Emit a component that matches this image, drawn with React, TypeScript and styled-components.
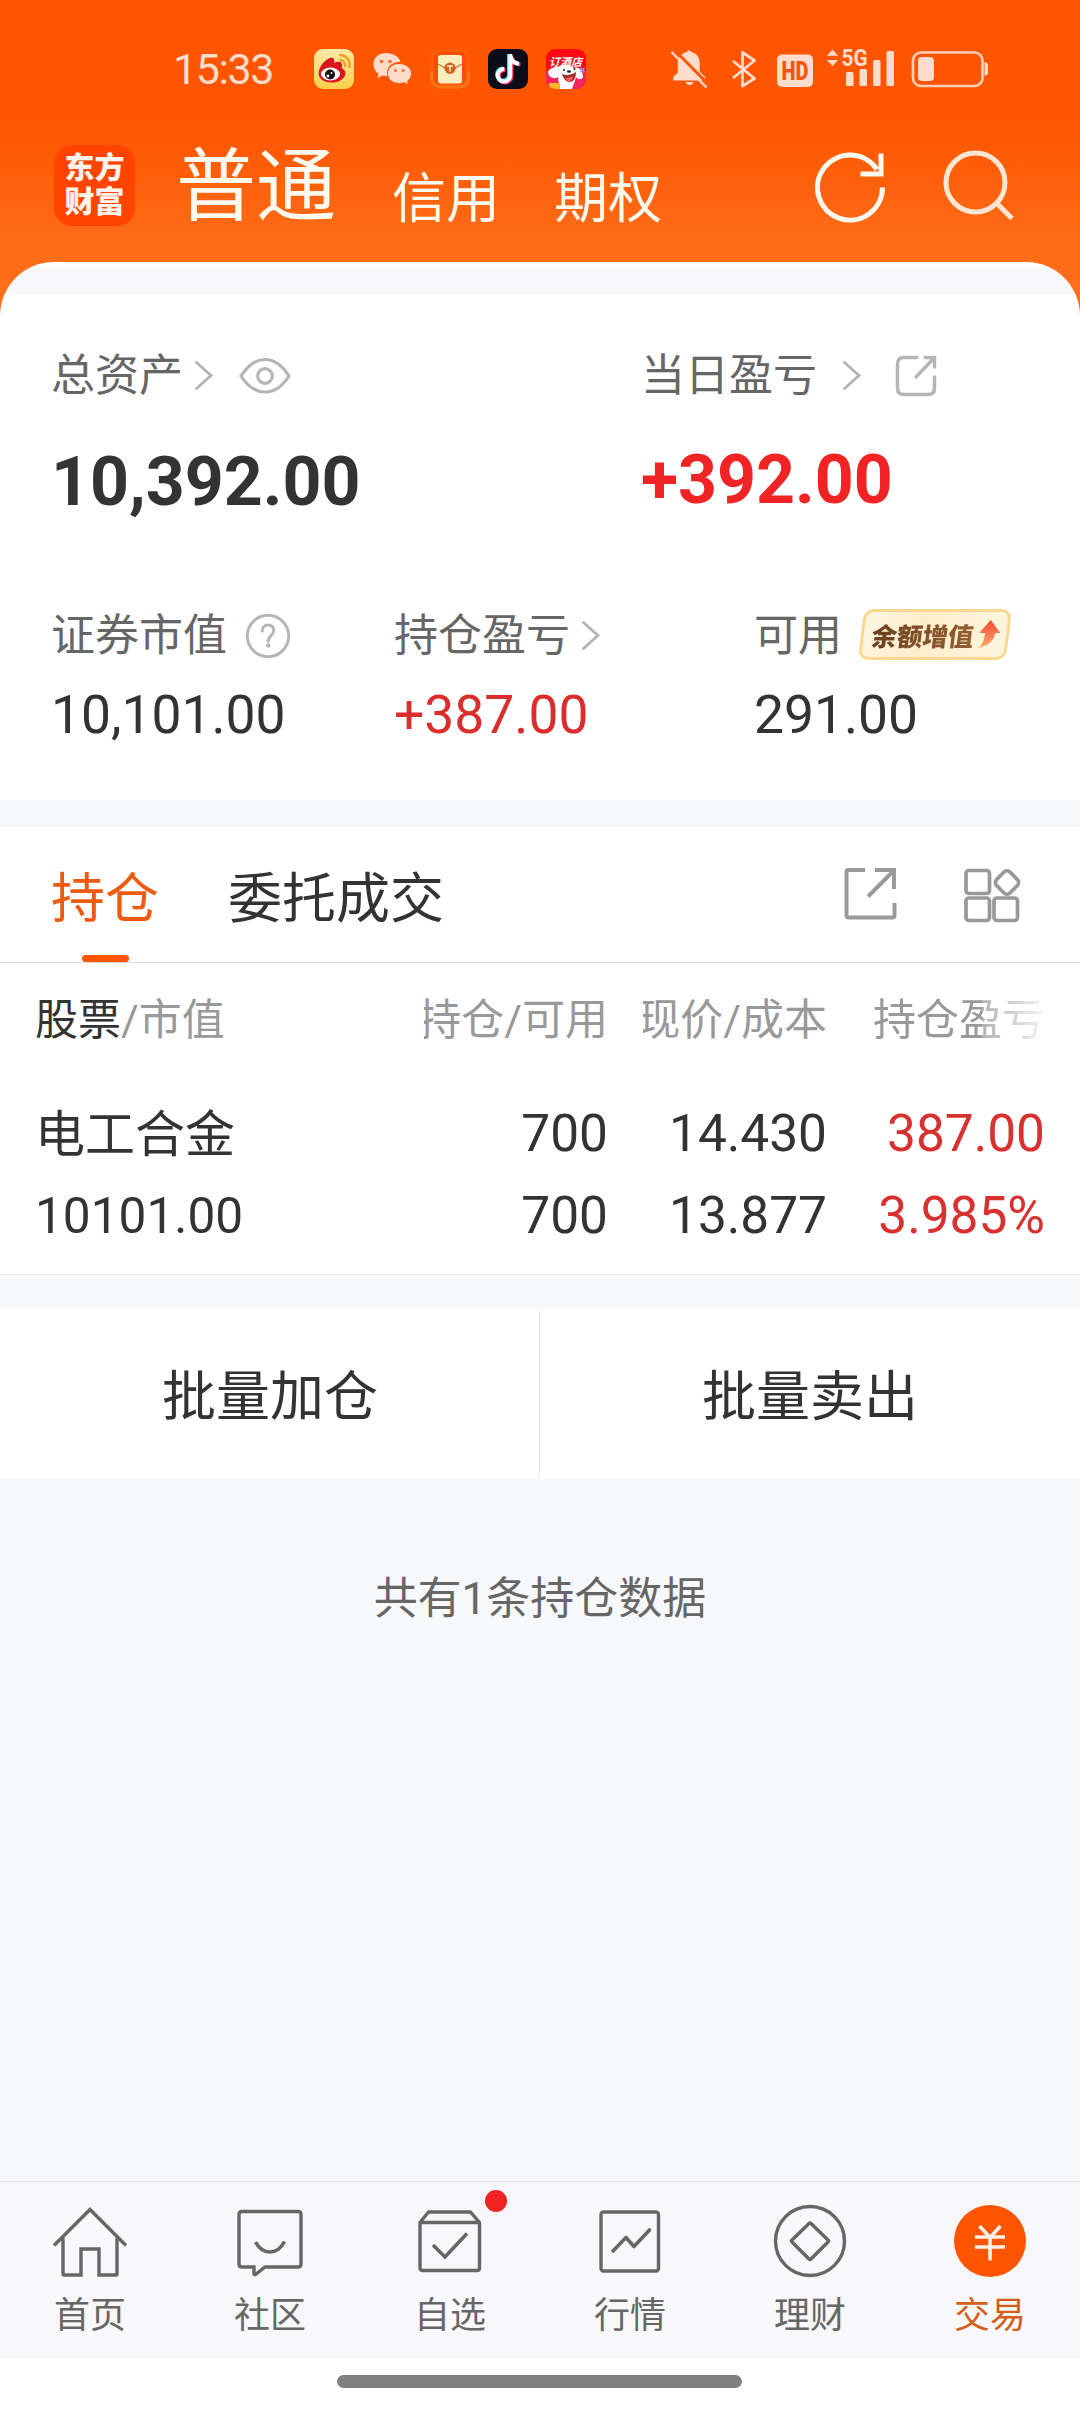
import React from "react";
import styled, { createGlobalStyle } from "styled-components";

const GlobalStyle = createGlobalStyle`
  * { box-sizing: border-box; }
  body { margin: 0; background: #fff; }
`;

const Page = styled.div`
  width: 1080px;
  height: 2412px;
  display: flex;
  flex-direction: column;
  overflow: hidden;
  font-family: Roboto, "Noto Sans CJK SC", sans-serif;
  color: #333;
  white-space: nowrap;
  background: #f7f8fa;
`;

const Hero = styled.header`
  flex: none;
  height: 320px;
  background: linear-gradient(180deg, #ff5500 0, #ff5500 122px, #ff6c18 245px, #ff701c 320px);
`;

const StatusBar = styled.div`
  height: 138px;
  padding: 0 92px 0 173px;
  display: flex;
  align-items: center;
  color: #ffdccb;
`;

const Clock = styled.div`
  width: 141px;
  font-size: 43px;
  line-height: 50px;
  letter-spacing: -1.4px;
`;

const AppIcons = styled.div`
  display: flex;
  gap: 18px;
  svg { display: block; }
`;

const SystemIcons = styled.div`
  margin-left: auto;
  display: flex;
  svg { display: block; }
`;

const TitleBar = styled.div`
  height: 124px;
  padding: 0 64px 0 54px;
  display: flex;
  align-items: flex-start;
  color: #fffaf0;
`;

const Logo = styled.div`
  width: 81px;
  height: 81px;
  margin-top: 7px;
  border-radius: 18px;
  background: #ff4400;
  color: #fff4ec;
  font: 900 30px/34px "Noto Sans CJK SC", sans-serif;
  text-align: center;
  padding-top: 3px;
`;

const AccountTab = styled.div<{ $main?: boolean }>`
  margin-left: ${(p) => (p.$main ? 41 : 54)}px;
  margin-right: ${(p) => (p.$main ? 2 : 0)}px;
  margin-top: ${(p) => (p.$main ? -1 : 27)}px;
  font-size: ${(p) => (p.$main ? 80 : 54)}px;
  line-height: ${(p) => (p.$main ? 100 : 70)}px;
`;

const TitleActions = styled.div`
  margin-left: auto;
  margin-top: 11px;
  display: flex;
  gap: 54px;
  svg { display: block; }
`;

const Sheet = styled.div`
  height: 58px;
  border-radius: 54px 54px 0 0;
  background: linear-gradient(180deg, #fff 0 5px, #f8f8fa 5px 32px, #fff 32px);
`;

const Assets = styled.section`
  flex: none;
  height: 480px;
  background: #fff;
`;

const PrimaryGrid = styled.div`
  display: grid;
  grid-template-columns: 590px 1fr;
  padding: 26px 0 0 51px;
`;

const MetricGrid = styled.div`
  display: grid;
  grid-template-columns: 343px 360px 1fr;
  padding: 84px 0 0 51px;
`;

const Label = styled.div`
  height: 60px;
  display: flex;
  align-items: center;
  font-size: 44px;
  line-height: 60px;
  color: #666;
  svg { display: block; flex: none; }
`;

const IconSlot = styled.span<{ $gap: number }>`
  margin-left: ${(p) => p.$gap}px;
`;

const BigValue = styled.div<{ $up?: boolean }>`
  margin-top: ${(p) => (p.$up ? 34 : 36)}px;
  height: 80px;
  font-size: 68px;
  line-height: 80px;
  font-weight: 700;
  color: ${(p) => (p.$up ? "#f02424" : "#333")};
`;

const Value = styled.div<{ $up?: boolean }>`
  margin-top: 14px;
  font-size: 53.4px;
  line-height: 70px;
  color: ${(p) => (p.$up ? "#dc2d2d" : "#333")};
`;

const Badge = styled.span`
  width: 148px;
  height: 51px;
  margin: -4px 0 0 19px;
  border: 3px solid #f8d98e;
  border-radius: 10px;
  background: linear-gradient(100deg, #fff6e2, #feedca 40%, #fff5df);
  transform: skewX(-7deg);
  display: flex;
  align-items: center;
  padding-left: 8px;
  gap: 5px;
`;

const BadgeText = styled.span`
  font: 900 25.5px/44px "Noto Sans CJK SC", sans-serif;
  background: linear-gradient(90deg, #6a4022, #95602f);
  background-clip: text;
  -webkit-background-clip: text;
  color: transparent;
`;

const Band = styled.div<{ $h: number }>`
  flex: none;
  height: ${(p) => p.$h}px;
  background: #f7f8fa;
`;

const TabBar = styled.nav`
  flex: none;
  height: 136px;
  background: #fff;
  border-bottom: 1px solid #dcdcdc;
  padding: 0 57px 0 51px;
  display: flex;
`;

const Tab = styled.div<{ $active?: boolean }>`
  position: relative;
  height: 135px;
  margin-right: 69px;
  font-size: 54px;
  line-height: 145px;
  color: ${(p) => (p.$active ? "#ee5a10" : "#333")};
  &::after {
    content: "";
    display: ${(p) => (p.$active ? "block" : "none")};
    position: absolute;
    left: 31px;
    bottom: 0;
    width: 47px;
    height: 7px;
    border-radius: 4px;
    background: #ff5500;
  }
`;

const TabActions = styled.div`
  margin-left: auto;
  padding-top: 40px;
  display: flex;
  gap: 66px;
  svg { display: block; }
`;

const Holdings = styled.section`
  flex: none;
  height: 312px;
  background: #fff;
  border-bottom: 1px solid #e9e9eb;
`;

const Row = styled.div<{ $top: number; $h: number }>`
  display: grid;
  grid-template-columns: 389px 184px 35px 184px 33px 185px;
  padding-left: 35px;
  padding-top: ${(p) => p.$top}px;
  height: ${(p) => p.$h}px;
`;

const HeadCell = styled.div<{ $right?: boolean }>`
  display: flex;
  justify-content: ${(p) => (p.$right ? "flex-end" : "flex-start")};
  overflow: hidden;
  font-size: 43px;
  line-height: 60px;
  color: #999;
  b { font-weight: 400; color: #333; }
`;

const FadingCell = styled(HeadCell)`
  mask-image: linear-gradient(90deg, #000 122px, rgba(0, 0, 0, 0.75) 122px, rgba(0, 0, 0, 0.1) 185px);
`;

const Gap = styled.div``;

const Cell = styled.div<{ $kind?: "name" | "amount"; $up?: boolean }>`
  text-align: ${(p) => (p.$kind ? "left" : "right")};
  font-size: ${(p) => (p.$kind === "name" ? 50 : p.$kind === "amount" ? 49.6 : 51.4)}px;
  line-height: ${(p) => (p.$kind === "name" ? 64 : 62)}px;
  color: ${(p) => (p.$up ? "#d93030" : "#333")};
`;

const BatchActions = styled.div`
  flex: none;
  height: 169px;
  display: grid;
  grid-template-columns: 540px 540px;
  background: #fff;
`;

const BatchButton = styled.div`
  text-align: center;
  font-size: 54px;
  line-height: 178px;
  height: 169px;
  & + & { box-shadow: -1px 0 #ebebeb; }
`;

const Summary = styled.div`
  flex: 1;
  padding-top: 91px;
  font-size: 44px;
  line-height: 60px;
  text-align: center;
  color: #666;
`;

const BottomNav = styled.nav`
  flex: none;
  height: 177px;
  border-top: 1px solid #e2e3e5;
  background: #f8f8fa;
  display: grid;
  grid-template-columns: repeat(6, 180px);
`;

const NavItem = styled.div<{ $active?: boolean }>`
  position: relative;
  display: flex;
  flex-direction: column;
  align-items: center;
  padding-top: 18px;
  font-size: 36px;
  line-height: 50px;
  color: ${(p) => (p.$active ? "#d35f1a" : "#666")};
  svg { display: block; margin-bottom: 11px; }
`;

const Dot = styled.i`
  position: absolute;
  left: 125px;
  top: 8px;
  width: 22px;
  height: 22px;
  border-radius: 50%;
  background: #f02323;
`;

const GestureArea = styled.div`
  flex: none;
  height: 54px;
  background: #fff;
  display: flex;
  justify-content: center;
  padding: 17px 1px 0 0;
`;

const GestureBar = styled.div`
  width: 405px;
  height: 13px;
  border-radius: 7px;
  background: #808080;
`;

const Weibo = () => (
  <svg width="40" height="40" viewBox="0 0 40 40">
    <defs>
      <linearGradient id="wb" x1="0" y1="0" x2="0" y2="1">
        <stop offset="0" stopColor="#ffe9a8" />
        <stop offset="1" stopColor="#fdd04a" />
      </linearGradient>
    </defs>
    <rect width="40" height="40" rx="9" fill="url(#wb)" />
    <path d="M16 9c4-1 5 2 4 5 4-2 8-2 8 2 0 2-1 3 1 4 4 3 3 8-2 11-6 4-16 3-20-1-6-6 1-18 9-21z" fill="#d9151e" />
    <ellipse cx="16.500" cy="25" rx="9.500" ry="6.500" fill="#fff" />
    <circle cx="16" cy="25.500" r="5" fill="#111" />
    <circle cx="14" cy="27" r="1.400" fill="#fff" />
    <circle cx="17.500" cy="24" r=".9" fill="#fff" />
    <path d="M26 6a10 10 0 0 1 9.500 12M26.500 11a5.500 5.500 0 0 1 4.500 6" fill="none" stroke="#f0a020" strokeWidth="2.400" strokeLinecap="round" />
  </svg>
);

const WeChat = () => (
  <svg width="40" height="40" viewBox="0 0 40 40">
    <g fill="#ffdccb">
      <path d="M14 4C6 4 1 9 1.500 16c.2 4 2 6.500 5 8.500L5.500 29l5-2.600c2 .5 3.500.6 5.500.6-3-9 4-14.500 12.500-14C27 7.500 21 4 14 4z" />
      <path d="M27 14.500c-7 0-11.500 4.500-11.500 10 0 6 5 10 12 10 1.500 0 3-.3 4.500-.7l4.500 2.400-1-4c2.500-2 4-4.500 4-7.700 0-5.500-5.500-10-12.500-10z" stroke="#ff5500" strokeWidth="1" />
    </g>
    <g fill="#ff6a26">
      <circle cx="9.500" cy="12.500" r="1.800" /><circle cx="18" cy="12.500" r="1.800" />
      <circle cx="23.500" cy="21.500" r="1.500" /><circle cx="31" cy="21.500" r="1.500" />
    </g>
  </svg>
);

const Envelope = () => (
  <svg width="40" height="40" viewBox="0 0 40 40">
    <rect width="40" height="40" rx="9" fill="#ff5c0a" />
    <path d="M1.500 22v8a9 9 0 0 0 9 8h19a9 9 0 0 0 9-8v-8" fill="none" stroke="#ff7418" strokeWidth="3" />
    <rect x="4" y="3" width="32" height="32" rx="6" fill="#fb4d05" />
    <rect x="8" y="6" width="24" height="28.500" rx="3" fill="#ffefc0" />
    <path d="M8 15l8 4.500M32 15l-8 4.500" stroke="#c9742c" strokeWidth="1.300" />
    <circle cx="20" cy="19.300" r="5.700" fill="#d3641f" />
    <path d="M17 17h6M20 17v5.500" stroke="#ffefc0" strokeWidth="1.500" />
  </svg>
);

const TikTok = () => (
  <svg width="40" height="40" viewBox="0 0 40 40">
    <rect width="40" height="40" rx="9" fill="#0b0b1a" />
    <g fill="none" strokeWidth="4">
      <path d="M21 5v21a6 6 0 1 1-6-6.500M21 7c1 4 4 7 9 7.500" stroke="#27e8e4" />
      <path d="M23.500 6.500v21a6.300 6.300 0 1 1-6-6.500M23.500 8c1 4 4 7 9 7.500" stroke="#fb2c57" />
      <path d="M22.300 5v21.500a6.300 6.300 0 1 1-6-6.500M22.300 7c1 4.500 4 7.300 8.700 7.700" stroke="#fff" />
    </g>
  </svg>
);

const HotelApp = () => (
  <svg width="40" height="40" viewBox="0 0 40 40">
    <defs><clipPath id="ha"><rect width="40" height="40" rx="9" /></clipPath></defs>
    <g clipPath="url(#ha)">
      <rect width="40" height="40" fill="#fb0a14" />
      <path d="M0 22h40v18H0z" fill="#f4245c" />
      <path d="M2 24c0-5 6-6 10-6 4-3 12-3 16 1 5-2 9 3 9 9-1 3-5 3-7 0-1 5-3 8-4 12H13c1-4-1-8-1-12-4 3-9 0-10-4z" fill="#fff" />
      <path d="M16 25q7 3 14-2 0 10-7 10-5-1-7-8z" fill="#a62b2b" />
      <path d="M19.500 29.500q4-1 7.500-2-1 5-4.500 5z" fill="#ff6262" />
      <ellipse cx="23" cy="22.500" rx="2" ry="1.300" fill="#222" />
      <circle cx="18" cy="21" r="1" fill="#222" /><circle cx="28.500" cy="20" r="1" fill="#222" />
      <path d="M3 34h11v6H3z" fill="#fdb32b" />
      <path d="M34.500 19l4 4m0-4l-4 4" stroke="#8da0ff" strokeWidth="1.500" />
      <text x="19.500" y="16.500" textAnchor="middle" fontFamily="Noto Sans CJK SC, sans-serif" fontWeight="700" fontStyle="italic" fontSize="11" fill="#fff">订酒店</text>
    </g>
  </svg>
);

const StatusGlyphs = () => (
  <svg width="320" height="46" viewBox="668 46 320 46">
    <g fill="#ffdccb">
      <path d="M689 50.500c1 0 1.700.6 2 1.600 5.500 1.300 8.700 5.300 8.700 10.500v9l5 5c.8 1 .3 2.700 0 3.900h-31.500c-.5-3 .3-4.700 4.600-7.500V62c0-5 3.400-8.700 9.200-10 .3-1 1-1.500 2-1.500z" />
      <path d="M685.500 82h8q-1 3-4 3t-4-3z" />
    </g>
    <path d="M675 50.500L709 85" stroke="#ff5500" strokeWidth="3" />
    <path d="M671.500 52L706.500 87.500" stroke="#ffdccb" strokeWidth="2.400" />
    <path d="M733 61l21.500 17.500L742.500 86V52.500l12 8L733 78" fill="none" stroke="#ffdccb" strokeWidth="2.800" strokeLinejoin="round" />
    <rect x="777" y="54.500" width="36" height="32.500" rx="5" fill="#ffdccb" />
    <text x="795" y="80" textAnchor="middle" fontFamily="Roboto, sans-serif" fontWeight="900" fontSize="25" textLength="27" lengthAdjust="spacingAndGlyphs" fill="#f2570c">HD</text>
    <path d="M832.500 49.500l5.700 6.200h-11.400zM832.500 66l5.700-6h-11.400z" fill="#ffdccb" />
    <text x="841.500" y="66" fontFamily="Roboto, sans-serif" fontWeight="700" fontSize="23.500" textLength="26" lengthAdjust="spacingAndGlyphs" fill="#ffdccb">5G</text>
    <g fill="#ffdccb">
      <rect x="846" y="72" width="7.500" height="14" rx="1.500" />
      <rect x="859.500" y="69" width="7.500" height="17" rx="1.500" />
      <rect x="873" y="60" width="7.500" height="26" rx="1.500" />
      <rect x="886.500" y="51" width="7.500" height="35" rx="1.500" />
      <rect x="918" y="57" width="16" height="24" rx="4" />
      <path d="M984.500 62q3.500 1 3.500 3v8q0 2-3.500 3z" />
    </g>
    <rect x="913" y="52.500" width="69.500" height="33.500" rx="8" fill="none" stroke="#ffd0b8" strokeWidth="2.600" />
  </svg>
);

const Chevron = () => (
  <svg width="18" height="30" viewBox="0 0 18 30">
    <path d="M1.500 1.500L16 14.500 1.500 27.500" fill="none" stroke="#b3b3b3" strokeWidth="2.800" strokeLinecap="round" />
  </svg>
);

const Eye = () => (
  <svg width="52" height="38" viewBox="0 0 52 38">
    <g fill="none" stroke="#b5b5b5" strokeWidth="3.200">
      <path d="M2 19C9 8 17 2.500 26 2.500S43 8 50 19C43 30 35 35 26 35S9 30 2 19z" strokeLinejoin="round" />
      <circle cx="26" cy="19" r="7.300" />
    </g>
  </svg>
);

const Help = () => (
  <svg width="46" height="46" viewBox="0 0 46 46">
    <circle cx="23" cy="23" r="20.700" fill="none" stroke="#b5b5b5" strokeWidth="2.900" />
    <path d="M17.200 18c0-3.500 2.300-6 5.900-6 3.400 0 5.700 2 5.700 5.300 0 5-5.600 5.200-5.600 11" fill="none" stroke="#b5b5b5" strokeWidth="3" strokeLinecap="round" />
    <circle cx="23.200" cy="32.500" r="2.200" fill="#b5b5b5" />
  </svg>
);

const ShareRound = () => (
  <svg width="42" height="42" viewBox="0 0 42 42">
    <g fill="none" stroke="#b5b5b5" strokeWidth="3.400" strokeLinecap="round">
      <path d="M22 2.500H9q-6.500 0-6.500 6.500v24q0 6.500 6.500 6.500h24q6.500 0 6.500-6.500V22" />
      <path d="M30 2.500h9.500V12M39 3L21 22" />
    </g>
  </svg>
);

const RiseArrow = () => (
  <svg width="22" height="29" viewBox="0 0 22 29">
    <defs>
      <linearGradient id="ra" x1="0" y1="0" x2="0" y2="1">
        <stop offset="0" stopColor="#f74732" />
        <stop offset="1" stopColor="#ffac6e" />
      </linearGradient>
    </defs>
    <path d="M10 0l11 13h-5C16 20 11 26 0 28 5 25 6 20 6 13H0z" fill="url(#ra)" />
  </svg>
);

const Refresh = () => (
  <svg width="76" height="76" viewBox="812 149 76 76">
    <g fill="none" stroke="#fffaf0" strokeWidth="5">
      <path d="M882.500 187.500A32.500 32.500 0 1 1 877 169.500" />
      <path d="M881 153.500V174H860.500" />
    </g>
  </svg>
);

const Search = () => (
  <svg width="74" height="76" viewBox="942 149 74 76">
    <g fill="none" stroke="#ffe6d2" strokeWidth="5">
      <circle cx="975.500" cy="182.500" r="29.500" />
      <path d="M996.500 203L1012 218.500" />
    </g>
  </svg>
);

const ShareSquare = () => (
  <svg width="53" height="56" viewBox="844 867 53 56">
    <g fill="none" stroke="#999" strokeWidth="3.900" strokeLinejoin="round">
      <path d="M865 870h-16.500q-2 0-2 2v43q0 2.500 2 2.500h44q2 0 2-2V903" />
      <path d="M875 870h19v19M893 871.500l-25 25" strokeLinejoin="miter" />
    </g>
  </svg>
);

const Widgets = () => (
  <svg width="60" height="56" viewBox="963 867 60 56">
    <g fill="none" stroke="#999" strokeWidth="3.700">
      <rect x="966" y="870.500" width="23.500" height="23" rx="3" />
      <rect x="966" y="898" width="23.500" height="22.500" rx="3" />
      <rect x="994" y="898" width="23.500" height="22.500" rx="3" />
      <rect x="997.500" y="873" width="19" height="19" rx="4.500" transform="rotate(45 1007 882.500)" />
    </g>
  </svg>
);

const NavIcon = ({ children }: { children: React.ReactNode }) => (
  <svg width="84" height="80" viewBox="0 0 84 80" fill="none" stroke="#666" strokeWidth="3.400">
    {children}
  </svg>
);

const navItems = [
  {
    label: "首页",
    icon: (
      <>
        <path d="M6 45.500L42 9.500l36 36" strokeWidth="3.500" />
        <path d="M15 37.500V74q0 1 1 1h17V49h18v26h17q1 0 1-1V37.500" />
      </>
    ),
  },
  {
    label: "社区",
    icon: (
      <>
        <path d="M14 11.500h56q3 0 3 3V64q0 3-3 3H37l-9.500 7.500q-1.500.5-1.500-1V67H14q-3 0-3-3V14.500q0-3 3-3z" />
        <path d="M27.500 42q5.500 10 14.500 10t14.500-10.500" strokeWidth="3.600" />
      </>
    ),
  },
  {
    label: "自选",
    icon: (
      <>
        <path d="M12 22.500L20.500 12h42L71.500 22.500V68q0 2.500-2.500 2.500H15q-3 0-3-3zM12 22.500h59.500" strokeLinejoin="round" />
        <path d="M25 45l12 12L59 33.500" strokeWidth="3.600" />
      </>
    ),
  },
  {
    label: "行情",
    icon: (
      <>
        <rect x="13" y="12" width="57.500" height="59" rx="2.500" />
        <path d="M25 51l13-13.500 8 9L61.500 30" strokeWidth="3.600" strokeLinecap="round" strokeLinejoin="round" />
      </>
    ),
  },
  {
    label: "理财",
    icon: (
      <>
        <circle cx="42" cy="41" r="34.500" />
        <path d="M41 23.500q1-1 2 0L60 40q1 1 0 2L43 59q-1 1-2 0L24 42q-1-1 0-2z" />
      </>
    ),
  },
  {
    label: "交易",
    icon: (
      <>
        <circle cx="42" cy="41" r="36" fill="#ff5500" stroke="none" />
        <path d="M31.500 26L42 37.500 52.500 26M27 37h30M27 47h30M42 37v23.500" stroke="#ffefe4" strokeWidth="3.600" />
      </>
    ),
  },
];

export default function App() {
  return (
    <Page>
      <GlobalStyle />
      <Hero>
        <StatusBar>
          <Clock>15:33</Clock>
          <AppIcons>
            <Weibo />
            <WeChat />
            <Envelope />
            <TikTok />
            <HotelApp />
          </AppIcons>
          <SystemIcons>
            <StatusGlyphs />
          </SystemIcons>
        </StatusBar>
        <TitleBar>
          <Logo>东方<br />财富</Logo>
          <AccountTab $main>普通</AccountTab>
          <AccountTab>信用</AccountTab>
          <AccountTab>期权</AccountTab>
          <TitleActions>
            <Refresh />
            <Search />
          </TitleActions>
        </TitleBar>
        <Sheet />
      </Hero>

      <Assets>
        <PrimaryGrid>
          <div>
            <Label>
              总资产
              <IconSlot $gap={12}><Chevron /></IconSlot>
              <IconSlot $gap={26}><Eye /></IconSlot>
            </Label>
            <BigValue>10,392.00</BigValue>
          </div>
          <div>
            <Label>
              当日盈亏
              <IconSlot $gap={26}><Chevron /></IconSlot>
              <IconSlot $gap={34}><ShareRound /></IconSlot>
            </Label>
            <BigValue $up>+392.00</BigValue>
          </div>
        </PrimaryGrid>
        <MetricGrid>
          <div>
            <Label>
              证券市值
              <IconSlot $gap={18}><Help /></IconSlot>
            </Label>
            <Value>10,101.00</Value>
          </div>
          <div>
            <Label>
              持仓盈亏
              <IconSlot $gap={12}><Chevron /></IconSlot>
            </Label>
            <Value $up>+387.00</Value>
          </div>
          <div>
            <Label>
              可用
              <Badge>
                <BadgeText>余额增值</BadgeText>
                <RiseArrow />
              </Badge>
            </Label>
            <Value>291.00</Value>
          </div>
        </MetricGrid>
      </Assets>

      <Band $h={27} />
      <TabBar>
        <Tab $active>持仓</Tab>
        <Tab>委托成交</Tab>
        <TabActions>
          <ShareSquare />
          <Widgets />
        </TabActions>
      </TabBar>

      <Holdings>
        <Row $top={27} $h={140}>
          <HeadCell><b>股票</b>/市值</HeadCell>
          <HeadCell $right>持仓/可用</HeadCell>
          <Gap />
          <HeadCell $right>现价/成本</HeadCell>
          <Gap />
          <FadingCell $right>持仓盈亏</FadingCell>
        </Row>
        <Row $top={0} $h={82}>
          <Cell $kind="name">电工合金</Cell>
          <Cell>700</Cell>
          <Gap />
          <Cell>14.430</Cell>
          <Gap />
          <Cell $up>387.00</Cell>
        </Row>
        <Row $top={0} $h={80}>
          <Cell $kind="amount">10101.00</Cell>
          <Cell>700</Cell>
          <Gap />
          <Cell>13.877</Cell>
          <Gap />
          <Cell $up>3.985%</Cell>
        </Row>
      </Holdings>

      <Band $h={34} />
      <BatchActions>
        <BatchButton>批量加仓</BatchButton>
        <BatchButton>批量卖出</BatchButton>
      </BatchActions>
      <Summary>共有1条持仓数据</Summary>

      <BottomNav>
        {navItems.map((item) => (
          <NavItem key={item.label} $active={item.label === "交易"}>
            <NavIcon>{item.icon}</NavIcon>
            {item.label === "自选" && <Dot />}
            {item.label}
          </NavItem>
        ))}
      </BottomNav>
      <GestureArea>
        <GestureBar />
      </GestureArea>
    </Page>
  );
}
